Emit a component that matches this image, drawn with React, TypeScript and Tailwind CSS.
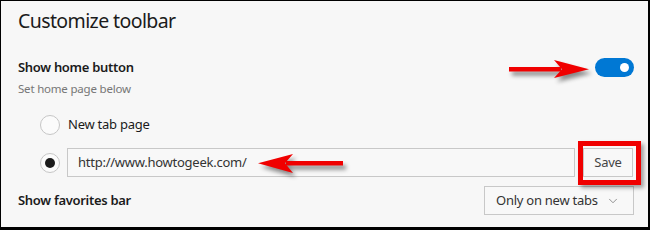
import { ChevronDown } from "lucide-react";

const font = { fontFamily: '"Noto Sans", "Open Sans", sans-serif' };

function Radio({ checked }: { checked?: boolean }) {
  return (
    <span className="flex h-[20px] w-[20px] shrink-0 items-center justify-center rounded-full border border-[#c6c6c6] bg-[#fbfbfb]">
      {checked && <span className="h-[10px] w-[10px] rounded-full bg-[#1b1b1b]" />}
    </span>
  );
}

function RightArrow() {
  return (
    <svg
      className="absolute left-[500px] top-[52px] h-[34px] w-[95px] drop-shadow-[3px_4px_2px_rgba(0,0,0,0.45)]"
      viewBox="500 52 95 34"
    >
      <rect x="508" y="66" width="52" height="4.5" fill="#f00000" />
      <polygon points="553,59 588,68.2 553,77 561,68.2" fill="#f00000" />
    </svg>
  );
}

function LeftArrow() {
  return (
    <svg
      className="absolute left-[250px] top-[146px] h-[34px] w-[100px] drop-shadow-[3px_4px_2px_rgba(0,0,0,0.45)]"
      viewBox="250 146 100 34"
    >
      <rect x="285" y="160" width="57" height="4.5" fill="#f00000" />
      <polygon points="292,153 257,162.2 292,172 284,162.2" fill="#f00000" />
    </svg>
  );
}

export default function App() {
  return (
    <div
      className="relative h-[230px] w-[650px] overflow-hidden border-b-[3px] border-l border-r-2 border-t border-black bg-[#f7f7f7] text-[#1b1b1b]"
      style={font}
    >
      <div className="pl-[17px] pr-[14px]">
        <h1 className="flex h-[40px] items-center text-[19.5px] font-normal tracking-[-0.6px]">Customize toolbar</h1>

        <div className="mt-[17px] flex h-[19px] items-center justify-between">
          <span className="text-[13px] font-semibold tracking-[-0.3px]">Show home button</span>
          <span className="flex h-[19px] w-[39px] items-center justify-end rounded-full bg-[#0078d4] pr-[5px]">
            <span className="h-[9px] w-[9px] rounded-full bg-white" />
          </span>
        </div>

        <p className="mt-[4px] h-[16px] text-[11.5px] leading-[16px] tracking-[-0.2px] text-[#767676]">Set home page below</p>

        <div className="mt-[17px] flex h-[22px] items-center gap-[8px] pl-[22px]">
          <Radio />
          <span className="text-[13px] tracking-[-0.25px]">New tab page</span>
        </div>

        <div className="mt-[12px] flex h-[29px] items-center pl-[22px]">
          <Radio checked />
          <div className="ml-[7px] flex h-[29px] w-[508px] items-center border border-[#c8c8c8] bg-[#f8f8f8] pl-[10px] text-[13px] tracking-[-0.25px] text-[#333]">
            http://www.howtogeek.com/
          </div>
          <button className="ml-[8px] flex h-[29px] w-[50px] items-center justify-center border border-[#c8c8c8] bg-[#f8f8f8] text-[13px] tracking-[-0.25px] text-[#444]">
            Save
          </button>
        </div>

        <div className="mt-[9px] flex h-[29px] items-center justify-between">
          <span className="text-[13px] font-semibold tracking-[-0.3px]">Show favorites bar</span>
          <div className="flex h-[29px] w-[150px] items-center justify-between border border-[#c8c8c8] bg-[#f8f8f8] pl-[11px] pr-[13px] text-[13px] tracking-[-0.25px] text-[#333]">
            <span>Only on new tabs</span>
            <ChevronDown size={14} strokeWidth={1.2} className="text-[#666]" />
          </div>
        </div>
      </div>

      <RightArrow />
      <LeftArrow />
      <div className="absolute left-[577px] top-[140px] h-[44px] w-[63px] border-[5px] border-[#f00000] shadow-[3px_3px_4px_rgba(0,0,0,0.35)]" />
    </div>
  );
}
